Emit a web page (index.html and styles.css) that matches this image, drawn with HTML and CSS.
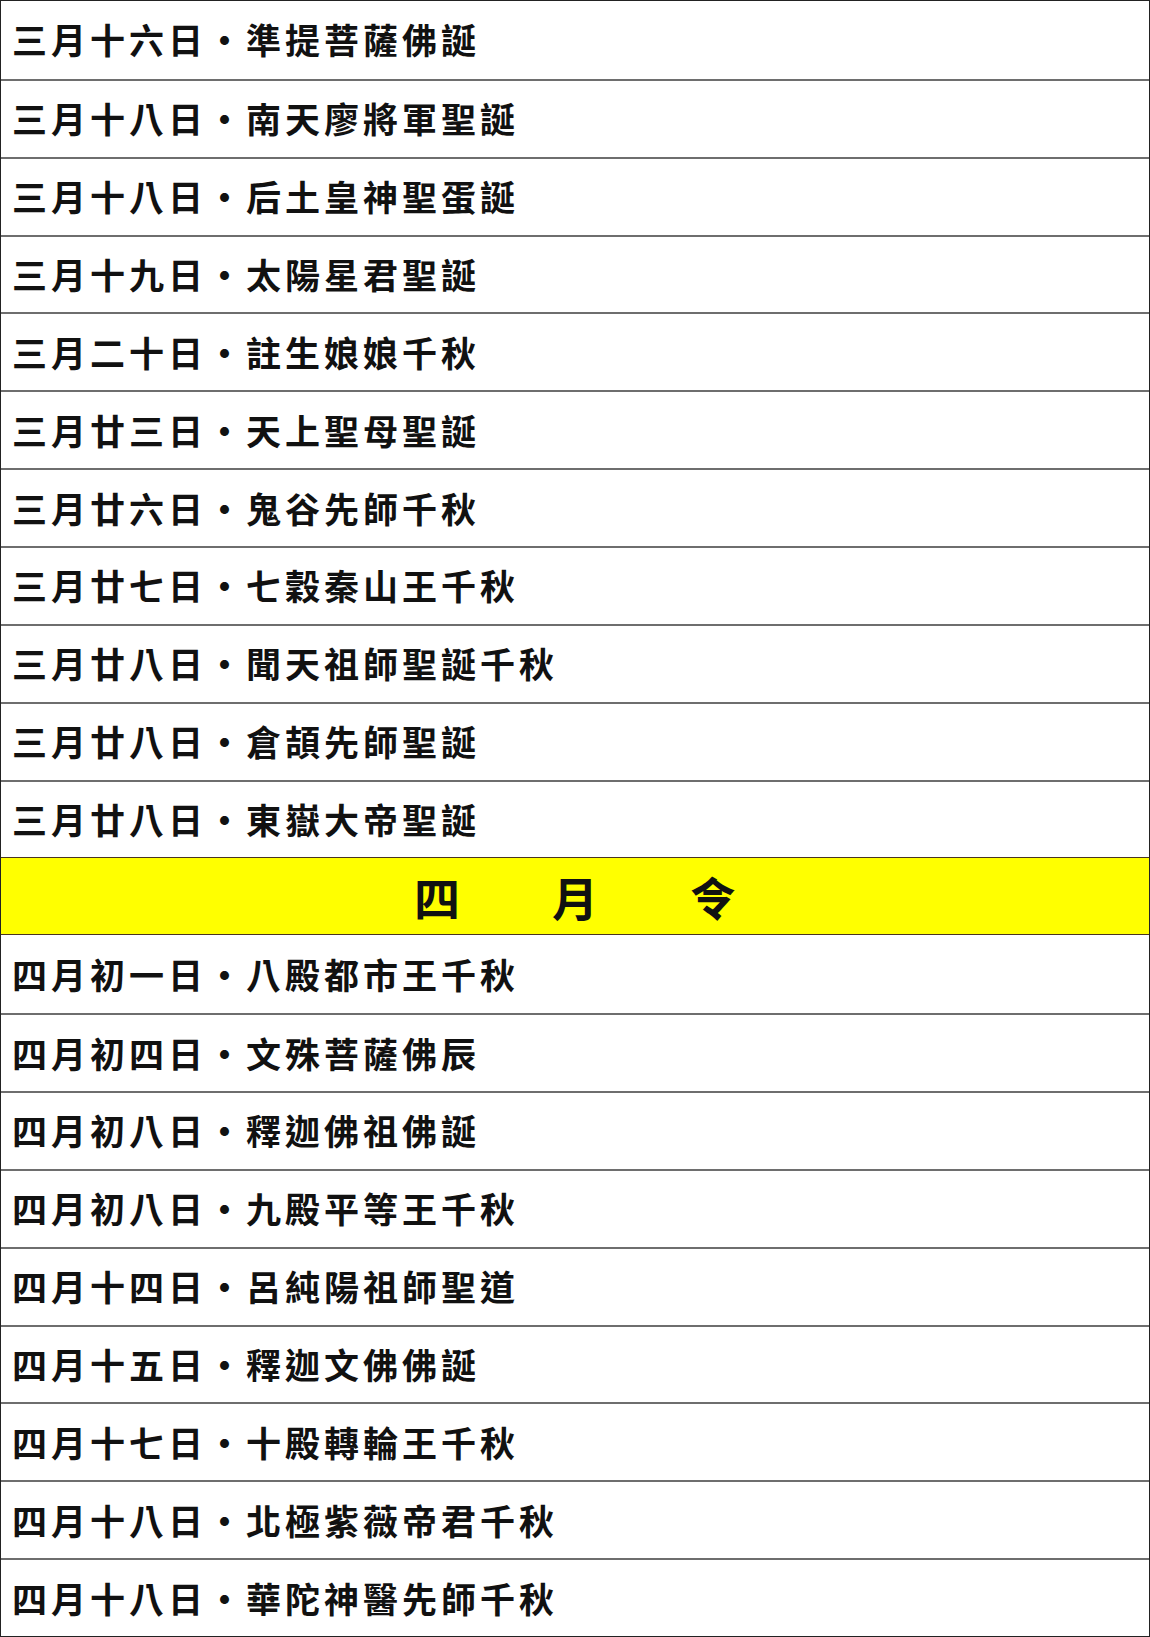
FILE: index.html
```html
<!DOCTYPE html>
<html lang="zh-Hant">
<head>
<meta charset="utf-8">
<link rel="stylesheet" href="styles.css">
</head>
<body>
<div class="table">
  <div class="row">三月十六日・準提菩薩佛誕</div>
  <div class="row">三月十八日・南天廖將軍聖誕</div>
  <div class="row">三月十八日・后土皇神聖蛋誕</div>
  <div class="row">三月十九日・太陽星君聖誕</div>
  <div class="row">三月二十日・註生娘娘千秋</div>
  <div class="row">三月廿三日・天上聖母聖誕</div>
  <div class="row">三月廿六日・鬼谷先師千秋</div>
  <div class="row">三月廿七日・七穀秦山王千秋</div>
  <div class="row">三月廿八日・聞天祖師聖誕千秋</div>
  <div class="row">三月廿八日・倉頡先師聖誕</div>
  <div class="row">三月廿八日・東嶽大帝聖誕</div>
  <div class="row header"><span>四</span><span>月</span><span>令</span></div>
  <div class="row">四月初一日・八殿都市王千秋</div>
  <div class="row">四月初四日・文殊菩薩佛辰</div>
  <div class="row">四月初八日・釋迦佛祖佛誕</div>
  <div class="row">四月初八日・九殿平等王千秋</div>
  <div class="row">四月十四日・呂純陽祖師聖道</div>
  <div class="row">四月十五日・釋迦文佛佛誕</div>
  <div class="row">四月十七日・十殿轉輪王千秋</div>
  <div class="row">四月十八日・北極紫薇帝君千秋</div>
  <div class="row">四月十八日・華陀神醫先師千秋</div>
</div>
</body>
</html>
```
FILE: styles.css
```css
html, body {
  margin: 0;
  padding: 0;
  background: #ffffff;
}
.table {
  box-sizing: border-box;
  width: 1150px;
  height: 1637px;
  border: 1px solid #222222;
  display: grid;
  grid-template-rows: repeat(21, 1fr);
  font-family: "Noto Sans CJK TC", "Noto Sans CJK SC", sans-serif;
  color: #111111;
}
.row {
  display: flex;
  align-items: center;
  padding-left: 11px;
  padding-bottom: 2px;
  font-size: 35px;
  font-weight: 700;
  letter-spacing: 4px;
  line-height: 1;
}
.row + .row {
  border-top: 2px solid #6e6e6e;
}
.header {
  background: #ffff00;
  justify-content: center;
  gap: 92px;
  padding-left: 0;
  padding-bottom: 0;
  font-size: 46px;
  letter-spacing: 0;
  border-top: 1px solid #4a3520 !important;
  border-bottom: 1px solid #4a3520;
}
.header + .row {
  border-top: none;
}
```
